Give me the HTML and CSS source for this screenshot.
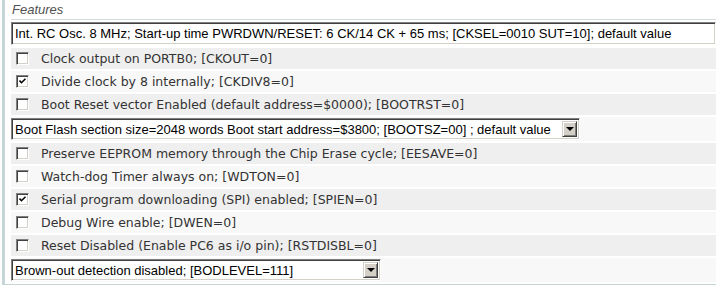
FILE: index.html
```html
<!DOCTYPE html>
<html lang="en">

<head>
    <meta charset="UTF-8">
    <meta name="viewport" content="width=device-width, initial-scale=1.0">
    <title>Fuse Features</title>
    <link rel="stylesheet" href="styles.css">
</head>

<body>
    <div class="panel">
        <div class="legend">Features</div>

        <div class="combo combo-wide">
            <span class="combo-text">Int. RC Osc. 8 MHz; Start-up time PWRDWN/RESET: 6 CK/14 CK + 65 ms; [CKSEL=0010 SUT=10]; default value</span>
        </div>

        <div class="fuse-list">
            <div class="fuse">
                <span class="check"></span>
                <span class="fuse-label">Clock output on PORTB0; [CKOUT=0]</span>
            </div>
            <div class="fuse">
                <span class="check checked">
                    <svg width="7" height="7" viewBox="0 0 7 7"><path d="M0.5 2.5 L2.5 4.7 L6.5 0.7" fill="none" stroke="#000" stroke-width="1.6"/></svg>
                </span>
                <span class="fuse-label">Divide clock by 8 internally; [CKDIV8=0]</span>
            </div>
            <div class="fuse">
                <span class="check"></span>
                <span class="fuse-label">Boot Reset vector Enabled (default address=$0000); [BOOTRST=0]</span>
            </div>
            <div class="fuse fuse-select">
                <div class="combo combo-boot">
                    <span class="combo-text">Boot Flash section size=2048 words Boot start address=$3800; [BOOTSZ=00] ; default value</span>
                    <span class="combo-button"><span class="arrow"></span></span>
                </div>
            </div>
            <div class="fuse">
                <span class="check"></span>
                <span class="fuse-label">Preserve EEPROM memory through the Chip Erase cycle; [EESAVE=0]</span>
            </div>
            <div class="fuse">
                <span class="check"></span>
                <span class="fuse-label">Watch-dog Timer always on; [WDTON=0]</span>
            </div>
            <div class="fuse">
                <span class="check checked">
                    <svg width="7" height="7" viewBox="0 0 7 7"><path d="M0.5 2.5 L2.5 4.7 L6.5 0.7" fill="none" stroke="#000" stroke-width="1.6"/></svg>
                </span>
                <span class="fuse-label">Serial program downloading (SPI) enabled; [SPIEN=0]</span>
            </div>
            <div class="fuse">
                <span class="check"></span>
                <span class="fuse-label">Debug Wire enable; [DWEN=0]</span>
            </div>
            <div class="fuse">
                <span class="check"></span>
                <span class="fuse-label">Reset Disabled (Enable PC6 as i/o pin); [RSTDISBL=0]</span>
            </div>
            <div class="fuse fuse-select">
                <div class="combo combo-bod">
                    <span class="combo-text">Brown-out detection disabled; [BODLEVEL=111]</span>
                    <span class="combo-button"><span class="arrow"></span></span>
                </div>
            </div>
        </div>
    </div>
</body>

</html>
```

FILE: styles.css
```css
body {
    margin: 0;
    font-family: "Liberation Sans", Arial, sans-serif;
    background-color: #fff;
}

.panel {
    width: 705px;
    margin-left: 2px;
    padding: 0 0 2px 6px;
    border-left: 3px solid #c6d5d5;
    border-bottom: 1px solid #c6d5d5;
}

.legend {
    height: 19px;
    line-height: 19px;
    padding-left: 1px;
    font-size: 13px;
    font-style: italic;
    color: #505050;
    border-bottom: 1px solid #d2dbdb;
}

.combo {
    display: flex;
    align-items: center;
    box-sizing: border-box;
    height: 23px;
    background-color: #fff;
    border-top: 1px solid #808080;
    border-left: 1px solid #808080;
    border-right: 1px solid #fff;
    border-bottom: 1px solid #fff;
    box-shadow: inset 1px 1px 0 #404040, inset -1px -1px 0 #d4d0c8;
    font-size: 13px;
    color: #000;
}

.combo-wide {
    margin-top: 2px;
    width: 705px;
}

.combo-boot {
    width: 569px;
    height: 22px;
}

.combo-bod {
    width: 370px;
    height: 22px;
}

.combo-text {
    flex: 1;
    padding-left: 3px;
    white-space: nowrap;
    overflow: hidden;
}

.combo-button {
    display: flex;
    align-items: center;
    justify-content: center;
    box-sizing: border-box;
    width: 15px;
    height: 16px;
    margin-right: 2px;
    background-color: #d4d0c8;
    border-top: 1px solid #d4d0c8;
    border-left: 1px solid #d4d0c8;
    border-right: 1px solid #404040;
    border-bottom: 1px solid #404040;
    box-shadow: inset 1px 1px 0 #fff, inset -1px -1px 0 #808080;
}

.arrow {
    width: 0;
    height: 0;
    border-left: 4px solid transparent;
    border-right: 4px solid transparent;
    border-top: 4px solid #000;
}

.fuse-list {
    display: flex;
    flex-direction: column;
    gap: 2px;
    margin-top: 3px;
}

.fuse {
    display: flex;
    align-items: center;
    height: 21px;
    background-color: #efefef;
}

.fuse:nth-child(even) {
    background-color: #f8f8f8;
}

.fuse-select {
    height: 24px;
}

.check {
    display: flex;
    align-items: center;
    justify-content: center;
    box-sizing: border-box;
    width: 13px;
    height: 13px;
    margin-left: 5px;
    margin-right: 12px;
    background-color: #fff;
    border-top: 1px solid #808080;
    border-left: 1px solid #808080;
    border-right: 1px solid #fff;
    border-bottom: 1px solid #fff;
    box-shadow: inset 1px 1px 0 #404040, inset -1px -1px 0 #d4d0c8;
}

.fuse-label {
    font-family: "DejaVu Sans", Verdana, sans-serif;
    font-size: 12.5px;
    color: #333;
    white-space: nowrap;
}
```
